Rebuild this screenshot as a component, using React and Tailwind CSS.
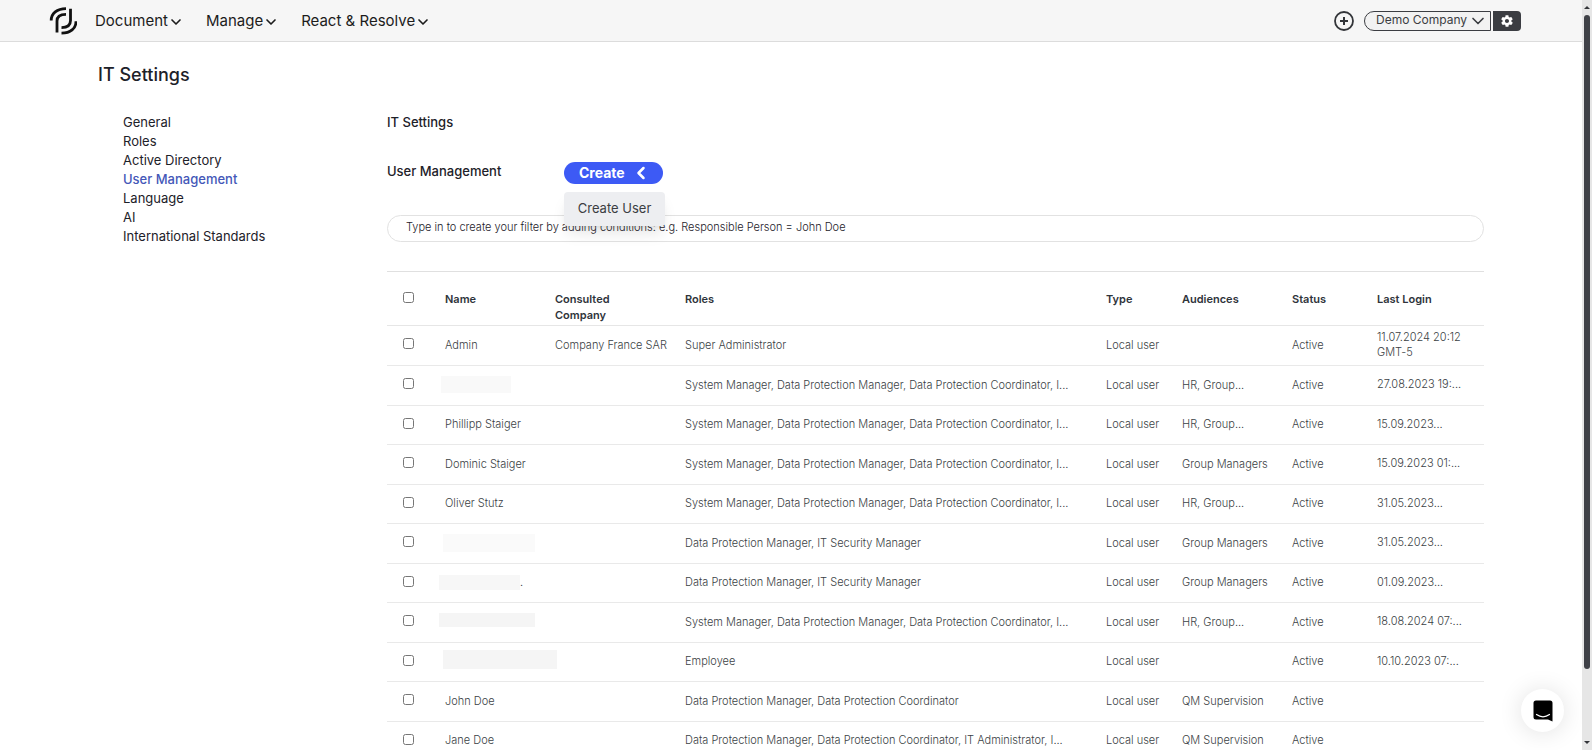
import { ChevronDown, ChevronLeft } from 'lucide-react';
import { IoMdSettings } from 'react-icons/io';

const NAV = ['Document', 'Manage', 'React & Resolve'];

const SIDEBAR = [
    'General',
    'Roles',
    'Active Directory',
    'User Management',
    'Language',
    'AI',
    'International Standards',
];

const MANAGER_ROLES = 'System Manager, Data Protection Manager, Data Protection Coordinator, I...';
const SECURITY_ROLES = 'Data Protection Manager, IT Security Manager';

const USERS = [
    { name: 'Admin', company: 'Company France SAR', roles: 'Super Administrator', audiences: '', login: '11.07.2024 20:12 GMT-5' },
    { hidden: '-ml-1 h-[17px] w-[70px] bg-[#f9f9f9]', roles: MANAGER_ROLES, audiences: 'HR, Group...', login: '27.08.2023 19:...' },
    { name: 'Phillipp Staiger', roles: MANAGER_ROLES, audiences: 'HR, Group...', login: '15.09.2023...' },
    { name: 'Dominic Staiger', roles: MANAGER_ROLES, audiences: 'Group Managers', login: '15.09.2023 01:...' },
    { name: 'Oliver Stutz', roles: MANAGER_ROLES, audiences: 'HR, Group...', login: '31.05.2023...' },
    { hidden: '-ml-0.5 h-[18px] w-[92px] bg-[#fafafa]', roles: SECURITY_ROLES, audiences: 'Group Managers', login: '31.05.2023...' },
    { hidden: '-ml-1.5 h-[15px] w-[81px] bg-[#f7f7f7]', suffix: '.', roles: SECURITY_ROLES, audiences: 'Group Managers', login: '01.09.2023...' },
    { hidden: '-ml-1.5 mb-1 h-[14px] w-[96px] bg-[#f5f5f5]', roles: MANAGER_ROLES, audiences: 'HR, Group...', login: '18.08.2024 07:...' },
    { hidden: '-ml-0.5 mb-1 h-[19px] w-[114px] shrink-0 bg-[#f5f5f5]', roles: 'Employee', audiences: '', login: '10.10.2023 07:...' },
    { name: 'John Doe', roles: 'Data Protection Manager, Data Protection Coordinator', audiences: 'QM Supervision', login: '' },
    { name: 'Jane Doe', roles: 'Data Protection Manager, Data Protection Coordinator, IT Administrator, I...', audiences: 'QM Supervision', login: '' },
];

function Logo() {
    return (
        <svg className="h-7 w-7" viewBox="0 0 28 28" fill="none" stroke="#111" strokeWidth="2.8">
            <path d="M2.200 13.500C2.200 6.500 8 1.600 17 1.600" />
            <path d="M8 25.500V14C8 9.500 11 7.400 17 7.400" />
            <path d="M21.500 1.800V13.500C21.500 18 18.500 20.600 12.500 20.600" />
            <path d="M27 14.200C27 21.500 21.500 26.200 12.500 26.200" />
        </svg>
    );
}

function TopBar() {
    return (
        <header className="flex h-[42px] shrink-0 items-center border-b border-[#dcdcdc] bg-[#f6f6f6] pl-[49px] pr-[61px]">
            <a href="#home" aria-label="Home">
                <Logo />
            </a>
            <nav className="ml-[18px] flex items-center gap-[22px] pt-0.5 text-[15px] text-[#1c1c1c]">
                {NAV.map((item) => (
                    <button key={item} type="button" className="flex items-center">
                        {item}
                        <ChevronDown className="h-4 w-4" strokeWidth={2.5} />
                    </button>
                ))}
            </nav>
            <div className="ml-auto flex items-center">
                <button type="button" aria-label="Add" className="mr-2.5 text-[#333539]">
                    <svg className="h-5 w-5" viewBox="0 0 20 20" fill="none" stroke="currentColor" strokeWidth="2">
                        <circle cx="10" cy="10" r="9" strokeWidth="1.800" />
                        <path d="M10 6v8M6 10h8" />
                    </svg>
                </button>
                <div className="relative flex items-center text-[#3b3d42]">
                    <select
                        aria-label="Company"
                        className="h-5 w-[127px] appearance-none rounded-l-full border border-[#3b3d42] bg-[#f2f2f2] pb-0.5 pl-[11px] text-xs"
                    >
                        <option>Demo Company</option>
                    </select>
                    <ChevronDown className="pointer-events-none absolute right-[3px] h-5 w-5" strokeWidth={2} />
                </div>
                <button
                    type="button"
                    aria-label="Settings"
                    className="ml-0.5 flex h-5 w-7 items-center justify-center rounded-r-[4px] bg-[#3b3d42] text-white"
                >
                    <IoMdSettings className="h-[14px] w-[14px]" />
                </button>
            </div>
        </header>
    );
}

function Sidebar() {
    return (
        <nav className="flex w-[264px] shrink-0 flex-col items-start text-[13px] leading-[19px]">
            {SIDEBAR.map((item) => (
                <a
                    key={item}
                    href="#settings"
                    className={item === 'User Management' ? 'font-medium text-[#4457b8]' : ''}
                >
                    {item}
                </a>
            ))}
        </nav>
    );
}

function CreateMenu() {
    return (
        <div className="relative">
            <button
                type="button"
                className="flex h-[22px] w-[99px] items-center gap-1.5 rounded-full bg-[#3d5af5] pl-[15px] text-sm font-bold text-white"
            >
                Create
                <ChevronLeft className="h-5 w-5" strokeWidth={3} />
            </button>
            <div className="absolute left-0 top-[30px] z-10 w-[101px] rounded-[4px] bg-[#edeef1] shadow-lg">
                <button type="button" className="h-[34px] w-full text-center text-[13px] text-[#3b3d42]">
                    Create User
                </button>
            </div>
        </div>
    );
}

function UserTable() {
    return (
        <table className="mt-[29px] w-full table-fixed border-t border-[#e0e0e0] text-left text-[11px] leading-4 text-[#3b3f45]">
            <colgroup>
                <col className="w-[58px]" />
                <col className="w-[110px]" />
                <col className="w-[130px]" />
                <col />
                <col className="w-[76px]" />
                <col className="w-[110px]" />
                <col className="w-[85px]" />
                <col className="w-[107px]" />
            </colgroup>
            <thead>
                <tr className="h-[54px] border-b border-[#e6e6e6] align-top text-[#2f343b]">
                    <th className="pl-4 pt-[20px]">
                        <input type="checkbox" aria-label="Select all users" className="block h-[11px] w-[11px]" />
                    </th>
                    {['Name', 'Consulted Company', 'Roles', 'Type', 'Audiences', 'Status', 'Last Login'].map((label) => (
                        <th key={label} className="pr-8 pt-[19px] font-semibold last:pr-0">
                            <span className={label === 'Consulted Company' ? '' : 'whitespace-nowrap'}>{label}</span>
                        </th>
                    ))}
                </tr>
            </thead>
            <tbody className="font-light">
                {USERS.map((user, idx) => (
                    <tr key={idx} className="h-[39px] border-b border-[#e9e9e9] first:h-10 even:h-10">
                        <td className="pb-1 pl-4">
                            <input type="checkbox" aria-label={`Select row ${idx + 1}`} className="block h-[11px] w-[11px]" />
                        </td>
                        <td className="whitespace-nowrap pb-0.5">
                            {user.hidden ? (
                                <div className="flex items-center">
                                    <div className={user.hidden} />
                                    {user.suffix}
                                </div>
                            ) : (
                                user.name
                            )}
                        </td>
                        <td className="whitespace-nowrap pb-0.5">{user.company}</td>
                        <td className="whitespace-nowrap pb-0.5">{user.roles}</td>
                        <td className="pb-0.5">Local user</td>
                        <td className="pb-0.5">{user.audiences}</td>
                        <td className="pb-0.5">Active</td>
                        <td className="pb-0.5 pr-4 leading-[15px]">{user.login}</td>
                    </tr>
                ))}
            </tbody>
        </table>
    );
}

function Scrollbar() {
    return (
        <div className="flex w-[10px] shrink-0 flex-col items-center bg-[#e6e6e6] py-1.5">
            <div className="border-x-[3px] border-b-[3px] border-transparent border-b-[#333539]" />
            <div className="mt-1.5 w-1.5 grow rounded-full bg-[#3f4147]" />
            <div className="mt-[72px] border-x-[3px] border-t-[3px] border-transparent border-t-[#333539]" />
        </div>
    );
}

export default function App() {
    return (
        <div className="flex h-screen overflow-hidden bg-white font-['Inter',sans-serif] text-[#1d2129]">
            <div className="flex min-w-0 grow flex-col">
                <TopBar />
                <main className="min-h-0 grow overflow-hidden px-[98px] pt-[19px]">
                    <h1 className="text-lg font-medium">IT Settings</h1>
                    <div className="mt-6 flex pl-[25px]">
                        <Sidebar />
                        <section className="min-w-0 grow">
                            <h2 className="text-[13px] font-medium leading-[19px]">IT Settings</h2>
                            <div className="mt-[30px] flex h-[22px] items-start">
                                <h3 className="w-[177px] text-[13px] font-medium leading-[19px]">User Management</h3>
                                <CreateMenu />
                            </div>
                            <input
                                type="text"
                                aria-label="Filter"
                                placeholder="Type in to create your filter by adding conditions: e.g. Responsible Person = John Doe"
                                className="mt-[31px] block h-[27px] w-full rounded-full border border-[#e2e2e2] px-[18px] pb-[3px] text-[11px] font-light placeholder:text-[#1d2129]"
                            />
                            <UserTable />
                        </section>
                    </div>
                </main>
            </div>
            <Scrollbar />
            <button
                type="button"
                aria-label="Open chat"
                className="fixed bottom-[18px] right-[28px] flex h-[43px] w-[43px] items-center justify-center rounded-full bg-white shadow-[0_1px_24px_rgba(0,0,0,0.12)]"
            >
                <svg className="h-[22px] w-5" viewBox="0 0 20 22">
                    <path d="M3 0.500h14a2.500 2.500 0 0 1 2.500 2.500v18.500L15 19.500H3A2.500 2.500 0 0 1 .5 17V3A2.500 2.500 0 0 1 3 .5z" fill="#000" />
                    <path d="M3.500 14.500c4 2.800 9 2.800 13 0" fill="none" stroke="#fff" strokeWidth="1.200" strokeLinecap="round" />
                </svg>
            </button>
        </div>
    );
}
